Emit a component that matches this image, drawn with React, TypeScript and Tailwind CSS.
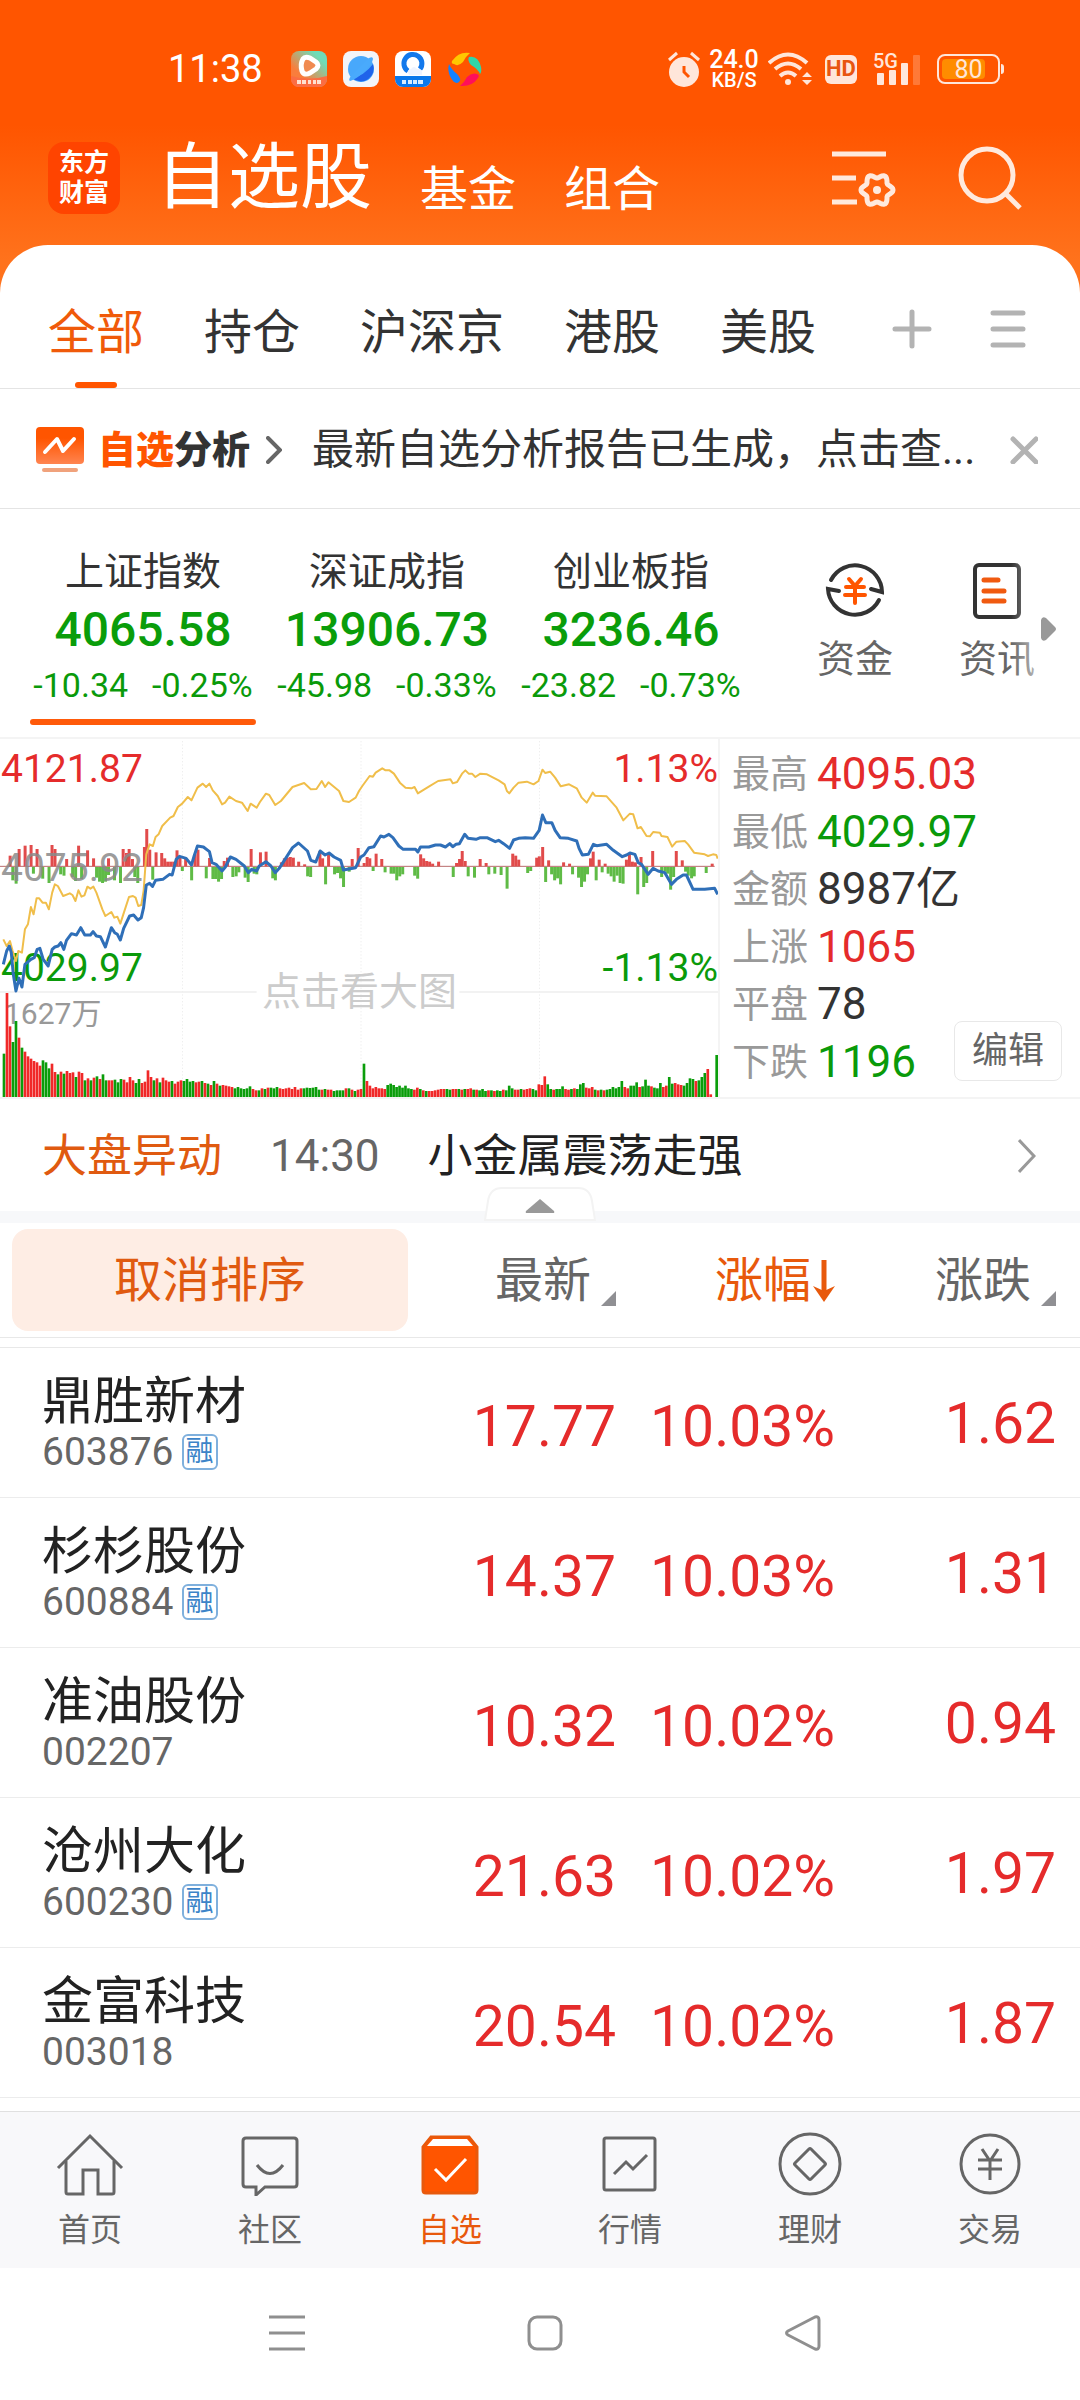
import { useState } from "react";
import clsx from "clsx";

const RED = "#f02828";
const GREEN = "#0a9d0a";

const tabs = ["全部", "持仓", "沪深京", "港股", "美股"];

const indices = [
  { name: "上证指数", value: "4065.58", diff: "-10.34", pct: "-0.25%" },
  { name: "深证成指", value: "13906.73", diff: "-45.98", pct: "-0.33%" },
  { name: "创业板指", value: "3236.46", diff: "-23.82", pct: "-0.73%" },
];

const stats = [
  { label: "最高", value: "4095.03", color: "text-[#e52b2b]" },
  { label: "最低", value: "4029.97", color: "text-[#0a9a0a]" },
  { label: "金额", value: "8987亿", color: "text-[#333333]" },
  { label: "上涨", value: "1065", color: "text-[#e52b2b]" },
  { label: "平盘", value: "78", color: "text-[#333333]" },
  { label: "下跌", value: "1196", color: "text-[#0a9a0a]" },
];

const stocks = [
  { name: "鼎胜新材", code: "603876", margin: true, price: "17.77", pct: "10.03%", diff: "1.62" },
  { name: "杉杉股份", code: "600884", margin: true, price: "14.37", pct: "10.03%", diff: "1.31" },
  { name: "准油股份", code: "002207", margin: false, price: "10.32", pct: "10.02%", diff: "0.94" },
  { name: "沧州大化", code: "600230", margin: true, price: "21.63", pct: "10.02%", diff: "1.97" },
  { name: "金富科技", code: "003018", margin: false, price: "20.54", pct: "10.02%", diff: "1.87" },
];

// Chart space is 2160 x 1074, three units to a pixel on a 720px wide chart
const averageLine =
  "10,625 20,645 30,630 38,660 48,690 55,660 66,665 75,595 84,580 93,528 101,550 110,502 118,502 128,515 138,515 147,535 157,485 165,460 174,465 190,495 210,487 218,492 227,510 236,478 245,497 254,493 263,467 272,473 281,467 290,485 308,535 317,555 335,543 344,560 353,557 362,578 371,550 388,498 400,495 408,500 416,525 425,522 432,480 440,370 450,340 460,345 468,318 477,310 488,285 512,260 522,255 535,228 548,218 565,198 576,208 594,170 610,158 620,168 630,158 640,178 655,195 668,220 677,215 690,197 710,210 728,215 745,240 754,218 772,230 782,213 800,188 810,192 828,222 845,210 880,168 915,156 935,175 952,174 968,150 978,168 988,154 1020,180 1033,210 1050,213 1070,200 1080,180 1090,165 1112,135 1122,137 1130,125 1150,112 1160,118 1172,118 1185,128 1203,155 1220,170 1238,172 1247,168 1257,187 1290,167 1318,150 1355,145 1362,157 1375,153 1390,128 1400,118 1410,128 1420,128 1430,138 1445,128 1465,130 1500,148 1518,160 1525,180 1532,187 1545,170 1560,155 1585,152 1605,160 1620,150 1632,116 1640,126 1655,122 1670,140 1687,166 1712,160 1735,172 1750,200 1765,215 1783,185 1790,194 1825,196 1855,230 1875,268 1895,248 1905,250 1918,292 1928,288 1945,315 1955,316 1965,303 1985,305 1990,315 2008,318 2022,347 2035,332 2060,330 2070,340 2088,365 2120,370 2130,375 2145,370 2155,372 2159,383";

const priceLine =
  "10,700 20,660 28,645 34,665 40,730 48,780 57,742 66,768 75,700 93,685 103,680 112,655 120,652 130,685 145,705 157,655 165,648 175,645 183,635 192,655 200,628 215,608 230,612 243,590 255,612 272,612 280,602 290,615 302,617 317,648 335,590 345,605 353,610 362,627 372,592 390,555 402,552 415,567 425,560 432,530 440,462 450,457 459,466 468,448 490,445 510,430 518,432 530,385 540,376 560,382 576,402 584,375 594,345 612,348 630,362 638,395 650,400 668,420 678,408 693,378 710,385 735,405 747,425 757,415 772,420 780,405 800,392 815,405 828,425 840,412 880,350 898,336 925,360 935,388 950,393 963,360 978,372 990,366 1005,378 1025,388 1033,417 1070,410 1085,378 1095,372 1110,350 1125,347 1145,315 1155,318 1170,310 1182,320 1200,345 1213,355 1250,355 1257,363 1265,348 1290,348 1310,342 1325,342 1340,348 1353,338 1362,347 1372,340 1382,338 1398,310 1408,322 1432,325 1445,320 1465,320 1490,332 1500,328 1515,338 1533,352 1545,327 1560,322 1580,320 1605,322 1622,298 1632,252 1642,275 1660,275 1670,298 1685,320 1710,322 1735,330 1742,352 1752,372 1770,370 1785,340 1795,344 1825,340 1845,358 1872,377 1885,372 1895,366 1910,370 1920,395 1930,400 1950,430 1965,412 1980,420 2000,425 2020,460 2035,445 2055,432 2065,432 2085,475 2120,475 2150,472 2159,490";

// [x, height] of the strength bars above and below the previous close
const strengthUp = [
  [30, 32], [57, 52], [75, 62], [93, 64], [111, 52], [156, 64], [165, 52], [200, 22], [236, 62], [263, 48],
  [281, 24], [326, 24], [370, 52], [380, 40], [388, 52], [398, 22], [434, 58], [441, 112], [450, 50], [469, 42],
  [486, 40], [495, 24], [504, 14], [513, 14], [522, 14], [532, 48], [541, 28], [558, 24], [586, 36], [595, 50],
  [630, 25], [674, 16], [684, 26], [755, 52], [783, 42], [800, 44], [846, 12], [855, 24], [864, 26], [873, 28],
  [882, 26], [898, 14], [916, 6], [962, 46], [970, 24], [988, 36], [1059, 22], [1077, 55], [1095, 10], [1104, 28],
  [1112, 24], [1131, 38], [1148, 22], [1265, 36], [1274, 24], [1283, 16], [1292, 14], [1301, 8], [1319, 14],
  [1373, 10], [1382, 22], [1390, 46], [1399, 16], [1444, 22], [1462, 10], [1542, 38], [1551, 32], [1560, 20],
  [1614, 26], [1622, 30], [1632, 58], [1650, 18], [1695, 12], [1713, 8], [1776, 24], [1784, 44], [1802, 20],
  [1820, 8], [1884, 20], [1893, 38], [1902, 14], [1911, 12], [1928, 28], [1963, 46], [2034, 46], [2052, 18], [2142, 8],
];

const strengthDown = [
  [38, 40], [48, 50], [100, 20], [128, 35], [147, 48], [182, 22], [192, 26], [218, 30], [227, 42], [245, 36],
  [290, 32], [299, 44], [308, 48], [317, 44], [326, 24], [344, 40], [362, 48], [405, 30], [414, 48], [459, 38],
  [548, 12], [576, 40], [620, 34], [640, 36], [648, 36], [657, 44], [666, 36], [700, 30], [710, 28], [718, 16],
  [737, 32], [746, 45], [764, 20], [772, 22], [820, 34], [828, 40], [925, 28], [934, 30], [979, 52], [1006, 22],
  [1015, 18], [1024, 34], [1033, 60], [1050, 14], [1122, 12], [1158, 16], [1176, 20], [1184, 20], [1193, 40],
  [1202, 28], [1211, 22], [1247, 26], [1256, 35], [1363, 30], [1408, 28], [1427, 32], [1470, 22], [1488, 20],
  [1507, 24], [1525, 65], [1587, 18], [1596, 12], [1641, 45], [1659, 22], [1668, 40], [1677, 34], [1686, 52],
  [1722, 22], [1740, 32], [1749, 60], [1758, 44], [1767, 22], [1793, 40], [1811, 16], [1829, 20], [1838, 28],
  [1847, 44], [1856, 26], [1865, 48], [1874, 50], [1918, 82], [1936, 60], [1945, 48], [1990, 30], [2000, 14],
  [2008, 20], [2017, 68], [2026, 30], [2062, 14], [2070, 26], [2080, 34], [2088, 28], [2124, 18],
];

// Volume per minute, negative = falling minute
const morningVolume = [
  -130, 312, 212, -165, -228, 178, -148, 136, 122, 115, 108, 104, 94, -110, -104, -86, 100, 75, -68, 76, -70, 78, 72, 74,
  -60, 76, 72, -50, 56, -50, 58, -62, 54, -68, -50, 50, 50, -52, -44, -54, 52, 44, 60, 50, -42, -54, 42, 46, 80, 60, -50,
  56, -44, 58, 50, 46, -48, 40, 46, 50, -48, -54, -46, -48, 44, 46, -48, 42, -40, 36, -48, 40, -34, 36, 34, 32, 30, -26,
  -30, -26, -24, -26, -32, 24, 20, -20, 26, -24, 28, -28, -26, -30, 26, 24, 26, 28, 24, 30, 22, 26, -26, -28, -27, -28,
  -30, -22, 22, -24, 22, 22, -18, -20, -20, -20, 26, -26, 22, -18, 22, 24,
];

const afternoonVolume = [
  -100, 48, 34, 26, 30, 26, 26, 24, -36, -40, -36, -30, -34, -28, -34, -26, -24, 22, 28, -24, 20, -18, 18, 18, 20, 22, 24,
  24, -24, -22, 24, 24, -24, 22, -24, 24, 26, -22, 22, -20, -24, -18, 20, -20, 18, -20, -18, 22, -20, -34, -26, 22, 22,
  -24, 22, 24, 26, -24, -20, 38, 36, 62, -38, -24, 22, -24, -24, -32, 24, 22, -24, 26, -24, -38, -42, 28, 26, 30, -22, 20,
  -22, 20, -22, -24, -30, -26, -30, -48, 30, 26, -34, -34, -44, 30, -32, -52, -34, 32, -28, -26, -42, 30, 34, -60, -40,
  42, 38, 36, -34, -42, -56, -54, 48, -50, -60, -72, 84, 8, 0, -126,
];

// Six rounded teeth around (45, 44)
const gearPoints = Array.from({ length: 73 }, (_, i) => {
  const a = (i * 5 * Math.PI) / 180;
  const r = 14 + 2 * Math.cos(6 * a);
  return `${(45 + r * Math.cos(a)).toFixed(1)},${(44 + r * Math.sin(a)).toFixed(1)}`;
}).join(" ");

function VolumeBars({ data, from, to }: { data: number[]; from: number; to: number }) {
  const step = (to - from) / (data.length - 1);
  return (
    <>
      {data.map((v, i) => (
        <rect
          key={i}
          x={from + i * step - 4}
          y={1098 - Math.abs(v)}
          width={8}
          height={Math.abs(v)}
          fill={v < 0 ? GREEN : RED}
        />
      ))}
    </>
  );
}

function IndexChart() {
  return (
    <div className="relative h-[358px] w-2/3 border-r-2 border-[#f4f4f4] text-[39px] leading-none">
      <span className="absolute left-px top-[11px] text-[#e52b2b]">4121.87</span>
      <span className="absolute right-0 top-[11px] text-[#e52b2b]">1.13%</span>
      <span className="absolute left-px top-[210px] text-[#0a9a0a]">4029.97</span>
      <span className="absolute right-0 top-[210px] text-[#0a9a0a]">-1.13%</span>
      <span className="absolute left-1 top-[260px] text-[30px] text-[#999999]">1627万</span>
      <svg
        className="absolute inset-0 h-full w-full"
        viewBox="0 24 2160 1074"
        preserveAspectRatio="none"
        fill="none"
        aria-hidden="true"
      >
        {[549, 1086, 1623].map((x) => (
          <path key={x} d={`M${x} 30V1098`} stroke="#eeeeee" strokeWidth="3" strokeDasharray="4 6" />
        ))}
        <path d="M0 783H772M1382 783H2160" stroke="#eeeeee" strokeWidth="5" />
        <path d="M0 406H2150" stroke="#b86a6a" strokeWidth="3" />
        {strengthUp.map(([x, h]) => (
          <rect key={x} x={x - 4} y={406 - h} width={9} height={h} fill="#e14b4b" />
        ))}
        {strengthDown.map(([x, h]) => (
          <rect key={x} x={x - 4} y={408} width={9} height={h} fill="#5fbb46" />
        ))}
        <VolumeBars data={morningVolume} from={12} to={1086} />
        <VolumeBars data={afternoonVolume} from={1095} to={2156} />
        <polyline points={averageLine} stroke="#f0be4a" strokeWidth="6" strokeLinejoin="round" />
        <polyline points={priceLine} stroke="#2f6fb8" strokeWidth="9" strokeLinejoin="round" />
      </svg>
      <span className="absolute left-px top-[110px] text-[#8a8a8a]/85">4075.92</span>
      <span className="absolute left-[262px] top-[234px] text-[39px] text-[#cccccc]">点击看大图</span>
    </div>
  );
}

function StatusBar() {
  return (
    <div className="flex h-[124px] items-center pl-[168px] pr-[76px] pt-[14px] text-white">
      <span className="w-[123px] text-[38px] leading-none">11:38</span>
      <div className="flex gap-4">
        <svg className="size-9" viewBox="0 0 36 36" aria-hidden="true">
          <defs>
            <linearGradient id="video" x1="0" y1="1" x2="1" y2="0">
              <stop offset="0.3" stopColor="#f97d3c" />
              <stop offset="0.8" stopColor="#6fdcb8" />
            </linearGradient>
          </defs>
          <rect width="36" height="36" rx="8" fill="url(#video)" />
          <path d="M0 25q18 5 36 0v3a8 8 0 0 1-8 8H8a8 8 0 0 1-8-8z" fill="#fb6d43" />
          <path
            d="M12 8q2-3 7-1l6 4q4 3 0 7l-6 4q-6 3-8-2-2-7 1-12z"
            fill="#f08a50"
            stroke="#fff"
            strokeWidth="5"
            strokeLinejoin="round"
          />
          <path d="M6 31h4m1 0h4m2 0h3m2 0h3m1 0h4" stroke="#ffe1d0" strokeWidth="4" />
        </svg>
        <svg className="size-9" viewBox="0 0 36 36" aria-hidden="true">
          <rect width="36" height="36" rx="8" fill="#f3f4f8" />
          <circle cx="18" cy="18" r="13" fill="#48a8fb" />
          <path d="M30 13a13 13 0 0 1-21 14q12-2 21-14z" fill="#1f63ea" />
          <path d="M26 7q4-2 4 1-1 6-9 13-9 8-14 9-2-1 1-5" fill="#49aafc" />
        </svg>
        <svg className="size-9" viewBox="0 0 36 36" aria-hidden="true">
          <rect width="36" height="36" rx="8" fill="#fff" />
          <path d="M0 25h36v3a8 8 0 0 1-8 8H8a8 8 0 0 1-8-8z" fill="#0a78ea" />
          <path d="M13 20a9 9 0 1 1 12-2" fill="none" stroke="#1379ec" strokeWidth="5" />
          <path d="M14 24q-3-5 2-6 3-4 6 0 6-1 5 6z" fill="#eef4ff" />
          <path d="M7 31h4m2 0h4m1 0h4m1 0h5" stroke="#d6ecff" strokeWidth="4" />
        </svg>
        <svg className="size-9" viewBox="0 0 36 36" aria-hidden="true">
          <path d="M5 10Q12 0 23 2q-4 3-7 9-5 5-9 2-3 0-2-3z" fill="#ffc800" />
          <path d="M22 6q9-2 12 10 1 5-1 7-2-5-9-9-4-5-2-8z" fill="#2fd6a8" />
          <path d="M30 23q3 1 1 4-6 9-18 8 4-3 7-9 5-5 10-3z" fill="#ff0f5a" />
          <path d="M2 13q2 5 8 10 5 5 2 8-4 3-8-4-4-7-2-14z" fill="#1482ff" />
        </svg>
      </div>
      <div className="ml-auto flex items-center text-[#ffe6da]">
        <svg className="h-9 w-8" viewBox="0 0 32 36" aria-hidden="true">
          <circle cx="16" cy="21" r="15" fill="currentColor" />
          <path d="M1 9l8-7M31 9l-8-7" stroke="currentColor" strokeWidth="3" />
          <path d="M16 15v6l5 5" stroke="#ff5500" strokeWidth="3" fill="none" />
        </svg>
        <div className="ml-2 flex w-[52px] flex-col items-center font-medium text-white">
          <span className="text-[25px] leading-[22px]">24.0</span>
          <span className="text-[20px] leading-[18px]">KB/S</span>
        </div>
        <svg className="ml-2 h-9 w-11" viewBox="0 0 44 36" fill="none" stroke="currentColor" strokeWidth="4" aria-hidden="true">
          <path d="M1 12q19-17 38 0M7 18q13-11 26 0M12 25q8-7 16 0" />
          <circle cx="20" cy="31" r="3" fill="currentColor" stroke="none" />
          <path d="M34 26l5-5 5 5zM34 29l5 5 5-5z" fill="currentColor" stroke="none" />
        </svg>
        <span className="ml-[13px] flex h-[29px] w-8 items-center justify-center rounded-md bg-[#ffe6da] text-[22px] font-bold leading-none text-[#e85510]">
          HD
        </span>
        <div className="relative ml-4 h-9 w-12">
          <span className="absolute left-0 top-0 text-[20px] font-medium leading-[20px]">5G</span>
          <svg className="h-9 w-12" viewBox="0 0 48 36" fill="currentColor" aria-hidden="true">
            <rect x="4" y="22" width="7" height="12" rx="1" />
            <rect x="16" y="19" width="7" height="15" rx="1" />
            <rect x="28" y="12" width="7" height="22" rx="1" />
            <rect x="40" y="4" width="7" height="30" rx="1" opacity="0.25" />
          </svg>
        </div>
        <div className="ml-4 flex items-center gap-px">
          <div className="relative flex h-[30px] w-[63px] items-center justify-center rounded-lg border-2 border-[#ffe6da] text-[25px] leading-none">
            <div className="absolute inset-y-[3px] left-[3px] w-[43px] rounded-sm bg-[#ff8c00]" />
            <span className="relative">80</span>
          </div>
          <div className="h-[10px] w-[3px] rounded-r-sm bg-[#ffe6da]" />
        </div>
      </div>
    </div>
  );
}

function Header() {
  return (
    <header className="flex h-[121px] items-center pb-[13px] pl-12 pr-[58px] text-white">
      <div className="flex size-[72px] flex-col items-center justify-center rounded-2xl bg-[#ff4400] text-[25px] font-bold leading-[30px]">
        <span>东方</span>
        <span>财富</span>
      </div>
      <nav className="ml-9 flex items-end gap-12 text-5xl leading-none">
        <a href="#stocks" className="text-[72px] leading-none">自选股</a>
        <a href="#funds">基金</a>
        <a href="#groups">组合</a>
      </nav>
      <div className="ml-auto flex items-center gap-[62px] text-[#ffe9dd]">
        <button aria-label="列表设置">
          <svg className="h-16 w-16" viewBox="0 0 64 64" fill="none" stroke="currentColor" strokeWidth="5" aria-hidden="true">
            <path d="M0 8h54M0 32h24M0 56h25" />
            <polygon points={gearPoints} strokeLinejoin="round" />
            <circle cx="45" cy="44" r="4" fill="currentColor" stroke="none" />
          </svg>
        </button>
        <button aria-label="搜索">
          <svg className="h-16 w-16" viewBox="0 0 64 64" fill="none" stroke="currentColor" strokeWidth="5" aria-hidden="true">
            <circle cx="29" cy="29" r="26" />
            <path d="M47 47l15 15" />
          </svg>
        </button>
      </div>
    </header>
  );
}

function Tabs() {
  const [active, setActive] = useState("全部");
  return (
    <div className="flex h-36 items-center border-b border-[#e4e4e4] pl-12 pr-[54px]">
      <nav className="flex h-full gap-[60px] text-5xl leading-none">
        {tabs.map((tab) => (
          <button
            key={tab}
            onClick={() => setActive(tab)}
            className={clsx("relative pt-8", tab === active ? "text-[#f05a0a]" : "text-[#333333]")}
          >
            {tab}
            {tab === active && (
              <span className="absolute bottom-0 left-1/2 h-[6px] w-[42px] -translate-x-1/2 rounded-full bg-[#ff5500]" />
            )}
          </button>
        ))}
      </nav>
      <div className="ml-auto flex gap-[58px] pt-6 text-[#b3b3b3]">
        <button aria-label="添加">
          <svg className="size-10" viewBox="0 0 40 40" stroke="currentColor" strokeWidth="5" strokeLinecap="round" aria-hidden="true">
            <path d="M20 3v34M3 20h34" />
          </svg>
        </button>
        <button aria-label="管理">
          <svg className="h-10 w-9" viewBox="0 0 36 40" stroke="currentColor" strokeWidth="5" strokeLinecap="round" aria-hidden="true">
            <path d="M3 4h30M3 20h30M3 36h30" />
          </svg>
        </button>
      </div>
    </div>
  );
}

function AnalysisBar() {
  return (
    <div className="flex h-[120px] items-center border-b border-[#e4e4e4] pl-9 pr-[42px] pt-0.5">
      <svg className="h-12 w-12" viewBox="0 0 48 48" fill="none" aria-hidden="true">
        <defs>
          <linearGradient id="board" x1="0" y1="0" x2="0" y2="1">
            <stop offset="0.3" stopColor="#ff5500" />
            <stop offset="1" stopColor="#ff8450" />
          </linearGradient>
        </defs>
        <rect y="1" width="48" height="37" rx="4" fill="url(#board)" />
        <path d="M9 26l12-13 6 12 11-12" stroke="#fff" strokeWidth="4" strokeLinecap="round" strokeLinejoin="round" />
        <path d="M8 44h32" stroke="#f0a27c" strokeWidth="4" strokeLinecap="round" />
      </svg>
      <a href="#analysis" className="ml-[14px] flex items-center text-[38px] font-black leading-none text-[#333333]">
        <span className="text-[#ff5500]">自选</span>分析
        <svg className="ml-4 h-7 w-4" viewBox="0 0 16 28" fill="none" stroke="#666666" strokeWidth="4" strokeLinecap="round" aria-hidden="true">
          <path d="M2 2l12 12L2 26" />
        </svg>
      </a>
      <p className="ml-[30px] min-w-0 flex-1 truncate text-[42px] leading-[56px] text-[#333333]">
        最新自选分析报告已生成，点击查...
      </p>
      <button aria-label="关闭" className="ml-8 text-[#b3b3b3]">
        <svg className="size-7" viewBox="0 0 28 28" stroke="currentColor" strokeWidth="5" strokeLinecap="round" aria-hidden="true">
          <path d="M3 3l23 23M26 3L3 26" />
        </svg>
      </button>
    </div>
  );
}

function IndexStrip() {
  return (
    <div className="flex h-[230px] border-b-2 border-[#f4f4f4]">
      <div className="flex min-w-0 flex-1 overflow-hidden pl-[21px]">
        {indices.map((item, i) => (
          <button key={item.name} className="relative flex w-[244px] shrink-0 flex-col items-center pt-[44px] leading-none">
            <span className="text-[39px] text-[#333333]">{item.name}</span>
            <span className="mt-[14px] text-5xl leading-none font-medium text-[#0a9d0a]">{item.value}</span>
            <span className="mt-[14px] flex gap-6 text-[34px] text-[#0a9a0a]">
              <span>{item.diff}</span>
              <span>{item.pct}</span>
            </span>
            {i === 0 && <span className="absolute bottom-3 h-[6px] w-[226px] rounded-full bg-[#ff5a0a]" />}
          </button>
        ))}
      </div>
      <div className="flex gap-[66px] pl-[41px] text-[38px] leading-none text-[#666666]">
        <button className="flex flex-col items-center pt-[51px]">
          <svg className="size-[60px]" viewBox="0 0 60 60" fill="none" stroke="#333333" strokeWidth="4" aria-hidden="true">
            <path d="M6 20A27 27 0 0 1 57 32L46 29" strokeLinecap="round" />
            <path d="M54 40A27 27 0 0 1 3 29L14 31" strokeLinecap="round" />
            <path d="M24 19l6 7 6-7M21 27h18M20 35h20M30 27v16" stroke="#ff5500" strokeLinecap="round" />
          </svg>
          <span className="mt-5">资金</span>
        </button>
        <button className="relative flex flex-col items-center pt-[51px]">
          <svg className="size-[60px]" viewBox="0 0 60 60" fill="none" strokeWidth="4" aria-hidden="true">
            <rect x="8" y="5" width="44" height="52" rx="4" stroke="#333333" />
            <path d="M17 20h14M17 31h20M17 41h20" stroke="#f05a10" strokeWidth="5" strokeLinecap="round" />
          </svg>
          <span className="mt-5">资讯</span>
          <span className="absolute inset-y-0 right-0 w-6 bg-gradient-to-r from-transparent to-white/50" />
        </button>
      </div>
      <svg className="ml-[6px] mr-6 mt-[108px] h-6 w-[15px]" viewBox="0 0 15 24" fill="#999999" aria-hidden="true">
        <path d="M0 3q1-4 5-2l9 9q2 2 0 4l-9 9q-4 2-5-2z" />
      </svg>
    </div>
  );
}

function IndexPanel() {
  return (
    <div className="flex border-b-2 border-[#f4f4f4]">
      <IndexChart />
      <div className="relative flex-1 pl-3 pt-[6px]">
        <dl>
          {stats.map((s, i) => (
            <div key={s.label} className={clsx("flex items-center", i % 2 ? "h-[57px]" : "h-[58px]")}>
              <dt className="w-[85px] text-[38px] leading-none text-[#999999]">{s.label}</dt>
              <dd className={clsx("text-[44px] leading-none", s.color)}>{s.value}</dd>
            </div>
          ))}
        </dl>
        <button className="absolute bottom-4 right-[18px] h-[60px] w-[108px] rounded-lg border border-[#e8e8e8] bg-white text-[36px] leading-none text-[#666666]">
          编辑
        </button>
      </div>
    </div>
  );
}

function MarketMove() {
  return (
    <div className="relative border-b-[12px] border-[#f7f8fa]">
      <a href="#moves" className="flex h-[112px] items-center pl-[42px] pr-11 pt-0.5 text-[45px] leading-none">
        <span className="text-[#e05a10]">大盘异动</span>
        <time className="ml-12 text-[44px] text-[#666666]">14:30</time>
        <span className="ml-12 text-[#222222]">小金属震荡走强</span>
        <svg className="ml-auto h-9 w-[18px]" viewBox="0 0 18 36" fill="none" stroke="#999999" strokeWidth="3" aria-hidden="true">
          <path d="M1 2l15 16L1 34" />
        </svg>
      </a>
      <button aria-label="收起" className="absolute -bottom-[10px] left-1/2 -translate-x-1/2">
        <svg className="h-[34px] w-[112px]" viewBox="0 0 112 34" aria-hidden="true">
          <path d="M1 33L4 14Q6 1 18 1h76q12 0 14 13l3 19z" fill="#fff" stroke="#f3f3f3" strokeWidth="2" />
          <path d="M56 12l14 12q1 2-1 2H43q-2 0-1-2z" fill="#999999" />
        </svg>
      </button>
    </div>
  );
}

function SortMark() {
  return (
    <svg className="ml-[10px] mt-9 h-[15px] w-[15px]" viewBox="0 0 15 15" fill="#8f8f93" aria-hidden="true">
      <path d="M15 0v15H0z" />
    </svg>
  );
}

function StockTable() {
  return (
    <table className="w-full table-fixed border-collapse">
      <colgroup>
        <col />
        <col className="w-[207px]" />
        <col className="w-[219px]" />
        <col className="w-[245px]" />
      </colgroup>
      <thead>
        <tr className="h-[114px] border-b border-[#e8e8e8] text-5xl leading-none text-[#666666]">
          <th className="p-0 pl-3 text-left font-normal">
            <button className="block h-[102px] w-[396px] rounded-2xl bg-[#feede4] pt-0.5 leading-none text-[#e05a10]">取消排序</button>
          </th>
          <th className="p-0 pt-0.5 font-normal">
            <button className="ml-auto flex items-center leading-none">
              最新
              <SortMark />
            </button>
          </th>
          <th className="p-0 pt-0.5 font-normal" aria-sort="descending">
            <button className="ml-auto flex items-center leading-none text-[#e8590c]">
              涨幅
              <svg className="ml-0.5 h-[42px] w-[22px]" viewBox="0 0 22 42" fill="none" stroke="currentColor" strokeWidth="5" aria-hidden="true">
                <path d="M11 0v34" />
                <path d="M0 26l11 5 11-5-11 16z" fill="currentColor" stroke="none" />
              </svg>
            </button>
          </th>
          <th className="p-0 pr-6 pt-0.5 font-normal">
            <button className="ml-auto flex items-center leading-none">
              涨跌
              <SortMark />
            </button>
          </th>
        </tr>
      </thead>
      <tbody className="text-right text-[57px] leading-none text-[#e52b2b]">
        <tr className="h-[10px] border-b border-[#e8e8e8]" aria-hidden="true">
          <td colSpan={4} className="p-0" />
        </tr>
        {stocks.map((s) => (
          <tr key={s.code} className="h-[150px] border-b border-[#ececec]">
            <td className="p-0 pl-[42px] pt-1 text-left">
              <div className="text-[51px] leading-[56px] text-[#222222]">{s.name}</div>
              <div className="flex h-11 items-center gap-2 text-[39px] leading-none text-[#666666]">
                {s.code}
                {s.margin && (
                  <span className="flex h-9 w-9 items-center justify-center rounded-md border-2 border-[#7fb0dd] text-[28px] text-[#3c84c8]">
                    融
                  </span>
                )}
              </div>
            </td>
            <td className="p-0 pt-2">{s.price}</td>
            <td className="p-0 pt-2">{s.pct}</td>
            <td className="p-0 pr-6 pt-0.5">{s.diff}</td>
          </tr>
        ))}
      </tbody>
    </table>
  );
}

const navItems = [
  {
    label: "首页",
    icon: (
      <>
        <path d="M2 36L34 4l32 32" />
        <path d="M10 29v31q0 2 2 2h15V38h15v24h14q2 0 2-2V29" />
      </>
    ),
  },
  {
    label: "社区",
    icon: (
      <>
        <path d="M10 6h48q3 0 3 3v43q0 3-3 3H29l-9 8v-8H10q-3 0-3-3V9q0-3 3-3z" />
        <path d="M21 33q13 17 26 0" />
      </>
    ),
  },
  {
    label: "自选",
    icon: (
      <>
        <path d="M7 15l8-10h38l8 10v43q0 3-3 3H10q-3 0-3-3z" fill="#ff5500" />
        <path d="M11 14l6-7h34l6 7z" fill="#fff" stroke="none" />
        <path d="M19 37l11 11 20-21" stroke="#fff" />
      </>
    ),
  },
  {
    label: "行情",
    icon: (
      <>
        <rect x="8" y="6" width="51" height="52" rx="2" />
        <path d="M18 42l12-12 7 7 14-14" />
      </>
    ),
  },
  {
    label: "理财",
    icon: (
      <>
        <circle cx="34" cy="32" r="30" />
        <path d="M33 17q1-1 2 0l14 14q1 1 0 2L35 47q-1 1-2 0L19 33q-1-1 0-2z" />
      </>
    ),
  },
  {
    label: "交易",
    icon: (
      <>
        <circle cx="34" cy="32" r="29" />
        <path d="M26 17l8 12 8-12M22 28h24M22 37h24M34 28v20" />
      </>
    ),
  },
];

function BottomNav() {
  return (
    <nav className="grid h-[157px] grid-cols-6 border-t border-[#e0e0e0] bg-[#f8f8fa] text-[32px] leading-none">
      {navItems.map((item) => (
        <a
          key={item.label}
          href={`#${item.label}`}
          className={clsx(
            "flex flex-col items-center pt-5",
            item.label === "自选" ? "text-[#e8590c]" : "text-[#666666]"
          )}
        >
          <svg className="h-16 w-[68px]" viewBox="0 0 68 64" fill="none" stroke="currentColor" strokeWidth="3" aria-hidden="true">
            {item.icon}
          </svg>
          <span className="mt-[18px]">{item.label}</span>
        </a>
      ))}
    </nav>
  );
}

function SystemNav() {
  return (
    <div className="flex h-[132px] items-center justify-center gap-[222px] bg-white pb-0.5 pl-[10px] text-[#8f8f8f]">
      <button aria-label="最近任务">
        <svg className="size-9" viewBox="0 0 36 36" stroke="currentColor" strokeWidth="3" aria-hidden="true">
          <path d="M0 2h36M0 18h36M0 34h36" />
        </svg>
      </button>
      <button aria-label="主屏幕">
        <svg className="size-9" viewBox="0 0 36 36" fill="none" stroke="currentColor" strokeWidth="3" aria-hidden="true">
          <rect x="2" y="2" width="32" height="32" rx="8" />
        </svg>
      </button>
      <button aria-label="返回">
        <svg className="size-9" viewBox="0 0 36 36" fill="none" stroke="currentColor" strokeWidth="3" strokeLinejoin="round" aria-hidden="true">
          <path d="M3 16L30 2q4-1 4 3v26q0 4-4 3L3 20q-3-2 0-4z" />
        </svg>
      </button>
    </div>
  );
}

export default function App() {
  return (
    <div className="bg-[linear-gradient(#ff5500_125px,#ff721c_260px)] font-[Roboto,'Noto_Sans_CJK_SC',sans-serif]">
      <StatusBar />
      <Header />
      <main className="rounded-t-[48px] bg-white pb-[13px]">
        <Tabs />
        <AnalysisBar />
        <IndexStrip />
        <IndexPanel />
        <MarketMove />
        <StockTable />
      </main>
      <BottomNav />
      <SystemNav />
    </div>
  );
}
